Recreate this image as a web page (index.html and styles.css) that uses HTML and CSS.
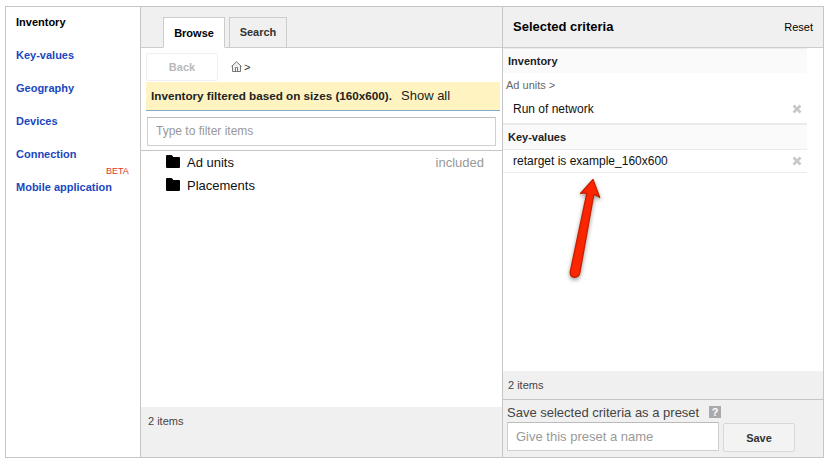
FILE: index.html
```html
<!DOCTYPE html>
<html lang="en">
<head>
<meta charset="utf-8">
<title>Targeting criteria</title>
<link rel="stylesheet" href="styles.css">
</head>
<body>
<main class="picker">
  <nav class="nav">
    <a class="active">Inventory</a>
    <a>Key-values</a>
    <a>Geography</a>
    <a>Devices</a>
    <a>Connection</a>
    <a>Mobile application<sup class="beta">BETA</sup></a>
  </nav>

  <section class="browser">
    <header class="tabs">
      <div class="tab selected">Browse</div>
      <div class="tab">Search</div>
    </header>
    <div class="crumbs">
      <button class="back" disabled>Back</button>
      <svg class="home" viewBox="0 0 11 11" width="11" height="11">
        <path d="M.5 5.5 5.5.7l5 4.8M1.5 5v5.5h8V5" fill="#eee" stroke="#777" stroke-width="1"/>
        <path d="M4.5 10V6.5h2V10" fill="#fff" stroke="#777" stroke-width="1"/>
      </svg>
      <span class="sep">&gt;</span>
    </div>
    <div class="notice"><b>Inventory filtered based on sizes (160x600).</b><a>Show all</a></div>
    <div class="filter"><input class="filter-input" type="text" placeholder="Type to filter items"></div>
    <ul class="items">
      <li><svg class="folder" viewBox="0 0 14 13" width="14" height="13"><path d="M0 1.2Q0 0 1 0H5Q6 0 6.6 1L7.2 2H13Q14 2 14 3V12Q14 13 13 13H1Q0 13 0 12Z"/></svg><span>Ad units</span><em>included</em></li>
      <li><svg class="folder" viewBox="0 0 14 13" width="14" height="13"><path d="M0 1.2Q0 0 1 0H5Q6 0 6.6 1L7.2 2H13Q14 2 14 3V12Q14 13 13 13H1Q0 13 0 12Z"/></svg><span>Placements</span></li>
    </ul>
    <footer class="count">2 items</footer>
  </section>

  <section class="criteria">
    <header class="criteria-head"><h1>Selected criteria</h1><a>Reset</a></header>
    <div class="groups">
      <h2>Inventory</h2>
      <div class="path">Ad units &gt;</div>
      <div class="row run"><span>Run of network</span><svg class="remove" viewBox="0 0 10 10" width="10" height="10"><path d="m1.5 1.5 7 7m0-7-7 7"/></svg></div>
      <h2 class="second">Key-values</h2>
      <div class="row key"><span>retarget is example_160x600</span><svg class="remove" viewBox="0 0 10 10" width="10" height="10"><path d="m1.5 1.5 7 7m0-7-7 7"/></svg></div>
    </div>
    <div class="total">2 items</div>
    <footer class="preset">
      <div class="preset-label">Save selected criteria as a preset<span class="help">?</span></div>
      <div class="preset-form"><input class="preset-input" type="text" placeholder="Give this preset a name"><button class="save">Save</button></div>
    </footer>
  </section>
</main>
<svg class="pointer" viewBox="0 0 70 125" width="70" height="125">
  <path d="M43 14.5 30.5 28.5Q33.500 27.500 36.800 28.500L20.200 107Q20 111.800 24.700 112.300Q29 112.300 29.800 108L43.800 29.500Q47 30 49.700 32.500Z" fill="#fb2500" stroke="#c81e00" stroke-width="1.300" stroke-linejoin="round"/>
</svg>
</body>
</html>
```
FILE: styles.css
```css
* { box-sizing: border-box; }

body {
  margin: 0;
  padding: 6px 5px 0;
  background: #fff;
  color: #222;
  font: 11px/16px "Liberation Sans", Arial, sans-serif;
}

h1, h2, ul { margin: 0; padding: 0; }
input, button { font-family: inherit; margin: 0; outline: 0; }
input::placeholder { color: #999; opacity: 1; }

.picker {
  display: grid;
  grid-template-columns: 135px 362px 320px;
  width: 819px;
  height: 452px;
  border: 1px solid #c6c6c6;
}

.nav {
  display: flex;
  flex-direction: column;
  gap: 17px;
  padding: 7px 0 0 10px;
  border-right: 1px solid #c6c6c6;
  color: #1a47c0;
  font-weight: bold;
}
.nav a { position: relative; }
.nav .active { color: #000; }
.beta {
  position: absolute;
  top: -14px;
  left: 90px;
  color: #d93a2b;
  font-size: 9px;
  line-height: 12px;
  font-weight: normal;
}

.browser, .criteria { display: flex; flex-direction: column; min-width: 0; }
.browser { border-right: 1px solid #c6c6c6; }

.tabs {
  display: flex;
  gap: 4px;
  height: 41px;
  padding: 10px 0 0 22px;
  background: #f0f0f0;
  border-bottom: 1px solid #ccc;
}
.tab {
  width: 58px;
  height: 31px;
  border: 1px solid #ccc;
  color: #333;
  font-weight: bold;
  line-height: 29px;
  text-align: center;
}
.tab.selected {
  width: 62px;
  border-bottom-color: #fff;
  background: #fff;
  color: #000;
  line-height: 31px;
}

.crumbs { display: flex; align-items: center; height: 28px; margin: 5px 0 0 5px; }
.back {
  width: 72px;
  height: 28px;
  padding: 0;
  border: 1px solid #f0f0f0;
  border-radius: 2px;
  background: #fff;
  color: #b8b8b8;
  font-size: 11px;
  font-weight: bold;
}
.home { margin: -2px 2px 0 13px; }
.sep { color: #333; }

.notice {
  display: flex;
  gap: 9px;
  height: 29px;
  margin: 1px 2px 0 5px;
  padding-left: 5px;
  background: #fff4c1;
  border-bottom: 1px solid #82a9c8;
  line-height: 28px;
}
.notice b { font-size: 11.7px; }
.notice a { font-size: 13px; }

.filter { height: 40px; padding: 6px 6px 0; border-bottom: 1px solid #c6c6c6; }
.filter-input {
  width: 349px;
  height: 29px;
  padding: 0 8px 2px;
  border: 1px solid #d0d0d0;
  border-top-color: #bbb;
  font-size: 12px;
}

.items { flex: 1; list-style: none; padding: 0 18px 0 25px; color: #111; font-size: 13px; }
.items li { display: flex; align-items: center; height: 23px; }
.folder { margin: -2px 7px 0 0; }
.items em { margin-left: auto; color: #999; font-style: normal; }

.count { height: 50px; padding: 6px 7px; background: #f0f0f0; color: #444; }

.criteria-head {
  display: flex;
  justify-content: space-between;
  height: 41px;
  padding: 0 10px;
  background: #f0f0f0;
  border-bottom: 1px solid #ccc;
  color: #000;
  line-height: 40px;
}
.criteria-head h1 { font-size: 13px; line-height: 39px; }

.groups { flex: 1; width: 304px; }
.groups h2 {
  height: 25px;
  padding-left: 5px;
  border-top: 1px solid #ebebeb;
  background: #fafafa;
  font-size: 11px;
  line-height: 25px;
}
.groups .second { height: 27px; border-top-width: 2px; border-bottom: 1px solid #ebebeb; line-height: 24px; }
.path { padding-left: 3px; height: 24px; color: #666; line-height: 24px; }
.row {
  display: flex;
  align-items: center;
  justify-content: space-between;
  padding: 0 5px 0 10px;
  color: #111;
  font-size: 12px;
}
.run { height: 26px; padding-bottom: 2px; }
.key { height: 23px; border-bottom: 1px solid #ebebeb; }
.remove { fill: none; stroke: #c8c8c8; stroke-width: 2.6; }

.total { height: 28px; padding: 6px 5px; background: #f0f0f0; color: #444; }
.preset { height: 58px; padding: 4px 4px 0; border-top: 1px solid #c6c6c6; background: #f0f0f0; }
.preset-label { display: flex; align-items: center; height: 18px; color: #444; font-size: 13px; }
.help {
  width: 12px;
  height: 12px;
  margin: -2px 0 0 10px;
  background: #aaa;
  color: #fff;
  font-size: 11px;
  font-weight: bold;
  line-height: 12px;
  text-align: center;
}
.preset-form { display: flex; gap: 4px; }
.preset-input {
  width: 212px;
  height: 29px;
  padding: 0 8px 1px;
  border: 1px solid #d0d0d0;
  border-top-color: #bbb;
  font-size: 13px;
}
.save {
  width: 72px;
  height: 29px;
  margin-top: 1px;
  padding: 0;
  border: 1px solid #d8d8d8;
  border-radius: 2px;
  background: #f3f3f3;
  color: #333;
  font-size: 11px;
  font-weight: bold;
}

/* Annotation arrow floating over the criteria list */
.pointer {
  position: absolute;
  top: 165px;
  left: 550px;
  filter: drop-shadow(0 2px 2px rgba(0, 0, 0, .4));
}
```
